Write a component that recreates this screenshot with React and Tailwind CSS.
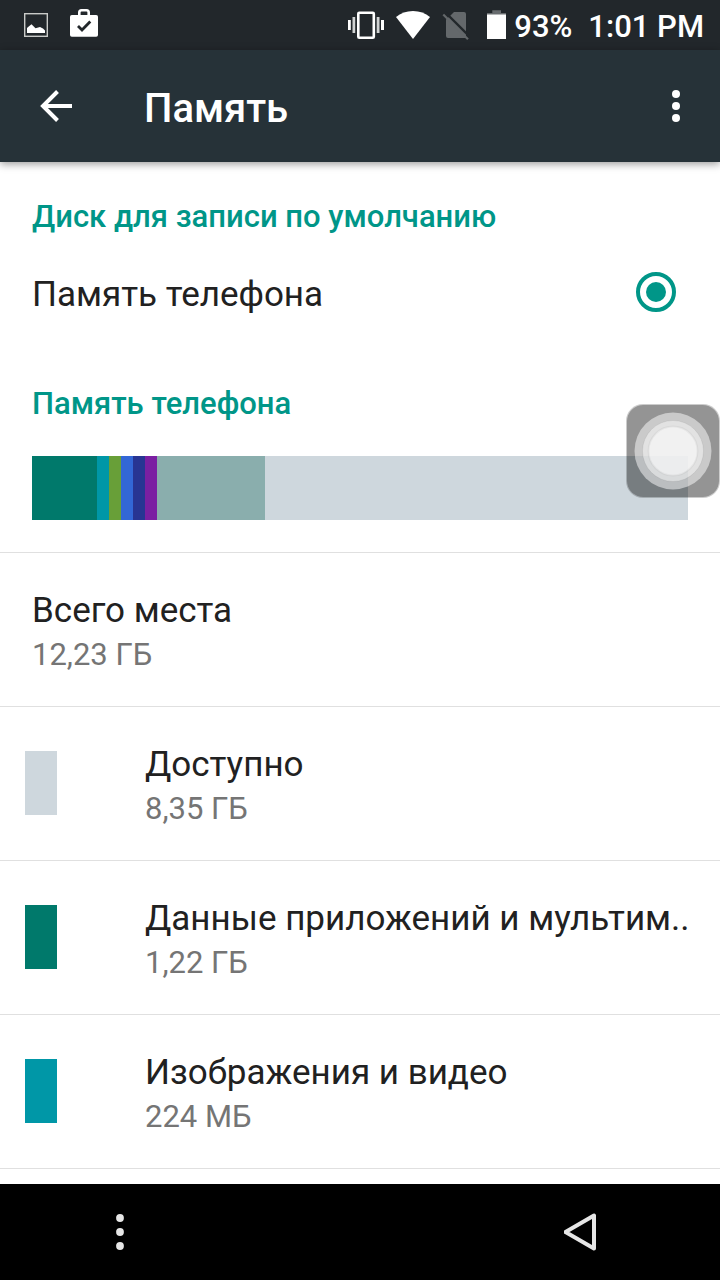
const segments = [
  { name: 'apps', width: 'w-[65px] bg-[#00796b]' },
  { name: 'images', width: 'w-3 bg-[#0097a7]' },
  { name: 'audio', width: 'w-3 bg-[#689f38]' },
  { name: 'downloads', width: 'w-3 bg-[#3367d6]' },
  { name: 'cache', width: 'w-3 bg-[#283593]' },
  { name: 'misc', width: 'w-3 bg-[#7b1fa2]' },
  { name: 'system', width: 'w-27 bg-[#8aaead]' },
];

const categories = [
  { title: 'Доступно', size: '8,35 ГБ', color: 'bg-[#ced7dd]' },
  { title: 'Данные приложений и мультим..', size: '1,22 ГБ', color: 'bg-[#00796b]' },
  { title: 'Изображения и видео', size: '224 МБ', color: 'bg-[#0097a7]' },
];

function StatusBar() {
  return (
    <div className="flex h-[50px] items-center justify-between bg-[#22272b] pr-4 pl-6 text-white">
      <div className="flex items-center">
        <svg className="h-[50px] w-6" viewBox="0 0 24 50" aria-hidden="true">
          <rect x="0.7" y="13.700" width="22.600" height="22.600" fill="none" stroke="#c9cac8" strokeWidth="1.4" />
          <path d="M3 33V28L5 26.200L7.500 24.300L11.500 28.300L16 27L19 28.500L21 30.500V33Z" fill="#fff" />
        </svg>
        <svg className="ml-[22px] h-[50px] w-7" viewBox="0 0 28 50" aria-hidden="true">
          <path d="M9.300 16V12.500Q9.300 10.300 11.500 10.300H16.500Q18.700 10.300 18.700 12.500V16" fill="none" stroke="#fff" strokeWidth="2.600" />
          <rect y="15" width="28" height="21.800" rx="1.800" fill="#fff" />
          <path d="M8 26L12 30L20.300 21.500" fill="none" stroke="#22272b" strokeWidth="2.800" />
        </svg>
      </div>
      <div className="flex items-center">
        <svg className="h-[50px] w-9" viewBox="0 0 36 50" aria-hidden="true">
          <rect x="10.300" y="12.700" width="15.500" height="25" rx="1" fill="none" stroke="#fff" strokeWidth="2.600" />
          <path d="M0 20H2.800V30H0ZM33 20H36V30H33Z" fill="#fff" />
          <path d="M4.500 17H7.200V33H4.500ZM28.700 17H31.500V33H28.700Z" fill="#d0d2d2" />
        </svg>
        <svg className="ml-3 h-[50px] w-[34px]" viewBox="0 0 34 50" aria-hidden="true">
          <path d="M0 17Q7 11 17 11T34 17L17 39Z" fill="#fff" />
        </svg>
        <svg className="ml-3 h-[50px] w-7" viewBox="0 0 28 50" aria-hidden="true">
          <path d="M12 12H22Q24 12 24 14V38H6Q4 38 4 36V19.500L8 16Z" fill="#64686b" />
          <path d="M2.500 12.500L28 38.500V34L4 9.500Z" fill="none" />
          <path d="M3 12L28 37" stroke="#22272b" strokeWidth="2.400" />
          <path d="M1.300 14.500L26 39.300" stroke="#64686b" strokeWidth="2.200" />
        </svg>
        <svg className="ml-[17px] h-[50px] w-5" viewBox="0 0 20 50" aria-hidden="true">
          <path d="M0 15V13H5.300V10.300H14V13H19V15Z" fill="#686c6f" />
          <rect y="14.500" width="19" height="24.500" fill="#fff" />
        </svg>
        <span className="ml-[7px] pt-1 text-[31px] leading-10 font-medium">93%</span>
        <time className="ml-4 pt-1 text-[31px] leading-10 font-medium">1:01 PM</time>
      </div>
    </div>
  );
}

function AppBar() {
  return (
    <header className="relative flex h-28 items-center bg-[#263238] px-8 text-white shadow-[0_2px_8px_rgba(0,0,0,0.4)]">
      <button type="button" aria-label="Назад" className="size-12">
        <svg viewBox="0 0 48 48" className="size-12" fill="none" stroke="#fff" strokeWidth="4" aria-hidden="true">
          <path d="M40 24H11M25.500 9.500L11 24L25.500 38.500" />
        </svg>
      </button>
      <h1 className="ml-16 flex-1 pt-1.5 text-[40px] leading-12 font-medium">Память</h1>
      <button type="button" aria-label="Ещё" className="flex h-12 w-6 items-center justify-center">
        <svg viewBox="0 0 8 32" className="h-8 w-2" fill="#fff" aria-hidden="true">
          <circle cx="4" cy="4" r="4" />
          <circle cx="4" cy="16" r="4" />
          <circle cx="4" cy="28" r="4" />
        </svg>
      </button>
    </header>
  );
}

function Heading({ children }) {
  return <h2 className="pt-[35px] text-[31px] leading-10 font-medium text-[#009688]">{children}</h2>;
}

function Entry({ title, size }) {
  return (
    <div className="min-w-0">
      <p className="truncate text-[35px] leading-11 text-[#212121]">{title}</p>
      <p className="text-[31px] leading-11 text-[#757575]">{size}</p>
    </div>
  );
}

export default function App() {
  return (
    <div className="relative flex min-h-screen flex-col bg-white font-[Roboto,sans-serif]">
      <StatusBar />
      <AppBar />
      <main className="flex-1">
        <section className="px-8 pb-0.5">
          <Heading>Диск для записи по умолчанию</Heading>
          <div className="flex h-[110px] items-center justify-between pr-3">
            <label htmlFor="phone-storage" className="pt-1.5 text-[35px] leading-11 text-[#212121]">
              Память телефона
            </label>
            <input
              id="phone-storage"
              type="radio"
              name="disk"
              defaultChecked
              className="size-10 appearance-none rounded-full border-4 border-[#009688] bg-[#009688] bg-clip-content p-1.5"
            />
          </div>
        </section>
        <section>
          <div className="px-8 pb-8">
            <Heading>Память телефона</Heading>
            <div className="mt-8 flex h-16 bg-[#ced7dd]">
              {segments.map((s) => (
                <div key={s.name} className={s.width} />
              ))}
            </div>
          </div>
          <ul className="border-t border-[#e0e0e0]">
            <li className="border-b border-[#e0e0e0] px-8 pt-9 pb-[29px]">
              <Entry title="Всего места" size="12,23 ГБ" />
            </li>
            {categories.map((c) => (
              <li
                key={c.title}
                className="flex items-start gap-22 border-b border-[#e0e0e0] pt-9 pr-6 pb-[29px] pl-[25px]"
              >
                <div className={`mt-2 h-16 w-8 shrink-0 ${c.color}`} />
                <Entry title={c.title} size={c.size} />
              </li>
            ))}
          </ul>
        </section>
      </main>
      <nav className="flex h-24 items-center justify-between bg-black px-24">
        <button type="button" aria-label="Меню" className="flex size-12 items-center justify-center">
          <svg viewBox="0 0 8 38" className="h-[38px] w-2" fill="#e6e6e6" aria-hidden="true">
            <circle cx="4" cy="5" r="3.900" />
            <circle cx="4" cy="19" r="3.900" />
            <circle cx="4" cy="33" r="3.900" />
          </svg>
        </button>
        <button type="button" aria-label="Назад" className="flex h-12 w-[60px] items-center">
          <svg viewBox="0 0 40 40" className="size-10" fill="none" stroke="#e6e6e6" strokeWidth="4" strokeLinejoin="round" aria-hidden="true">
            <path d="M30 3.500V36.500L1.500 20Z" />
          </svg>
        </button>
      </nav>
      <button
        type="button"
        aria-label="Быстрое меню"
        className="absolute top-[405px] right-px flex size-[92px] items-center justify-center rounded-2xl bg-black/42 ring-1 ring-black/20"
      >
        <svg viewBox="0 0 80 80" className="size-20" aria-hidden="true">
          <circle cx="40" cy="40" r="38.500" fill="#fff" fillOpacity="0.5" />
          <circle cx="40" cy="40" r="30.500" fill="#fff" fillOpacity="0.45" stroke="#000" strokeOpacity="0.06" />
          <circle cx="40" cy="40" r="24.500" fill="#fff" fillOpacity="0.5" stroke="#000" strokeOpacity="0.04" strokeWidth="2" />
        </svg>
      </button>
    </div>
  );
}
